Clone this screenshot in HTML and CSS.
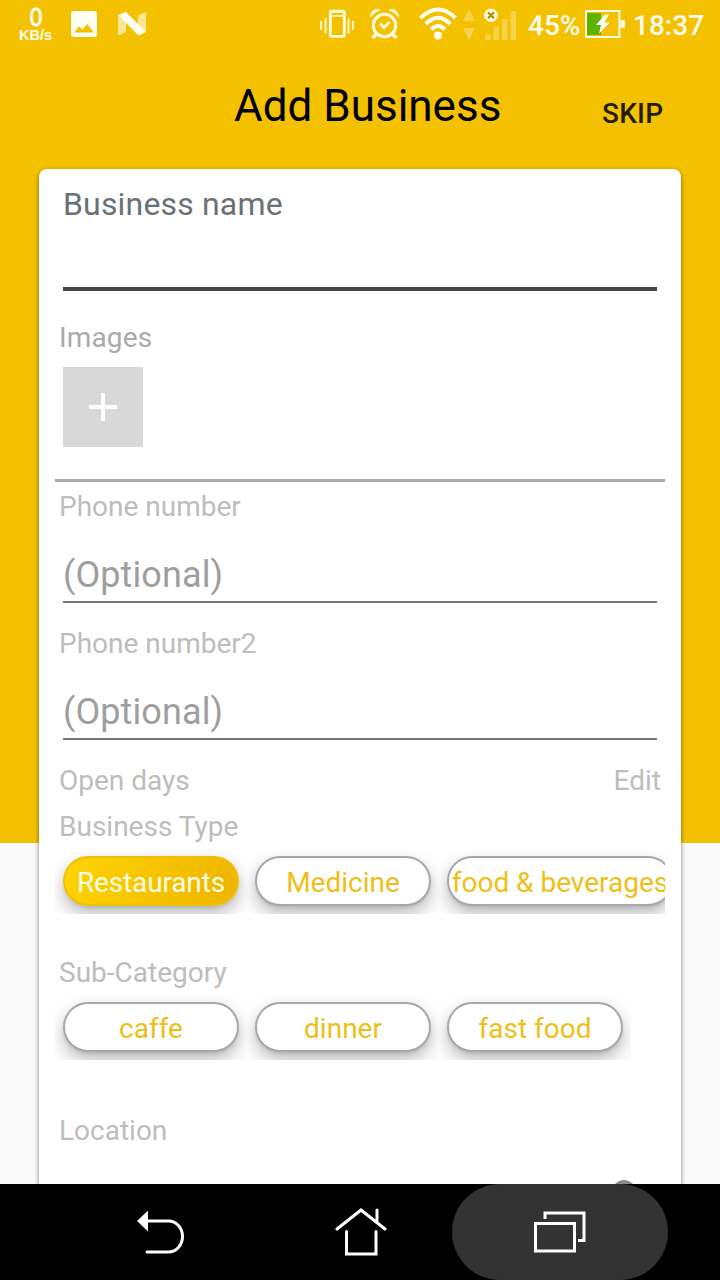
FILE: index.html
```html
<!DOCTYPE html>
<html lang="en">
<head>
<meta charset="utf-8">
<title>Add Business</title>
<link rel="stylesheet" href="styles.css">
</head>
<body>
<div class="screen">
  <header class="status">
    <div class="speed"><span class="speed-value">0</span><span class="speed-unit">KB/s</span></div>
    <svg class="ic-photo" width="26" height="26" viewBox="0 0 26 26"><path fill="#fffef2" fill-rule="evenodd" d="M3 0H23Q26 0 26 3V23Q26 26 23 26H3Q0 26 0 23V3Q0 0 3 0ZM3 21.500H23L16 13L11.500 18.500L8 15.500Z"/></svg>
    <svg class="ic-n" width="28" height="24" viewBox="0 0 28 24"><path fill="#fae694" d="M0 3L8 8V20L0 23.500ZM20 3.500L28 0V20L20 16Z"/><path fill="#fffef2" d="M0 3L8 0L28 20L20.500 23.500Z"/></svg>
    <svg class="ic-vibrate" width="34" height="30" viewBox="0 0 34 30" fill="none" stroke="#fffce0"><rect x="10.300" y="2.400" width="14" height="25" rx="1" stroke-width="2.800"/><path d="M10 7H24" stroke-width="1.500"/><path d="M13 4.800H18M20 4.800H22" stroke="#f5c200" stroke-width="1.500"/><path d="M10 2H24" stroke-width="2.500"/><path d="M1.200 12V21M5.500 9.500V24.500M28.500 9.500V24.500M32.800 12V21" stroke-width="1.800"/></svg>
    <svg class="ic-alarm" width="30" height="32" viewBox="0 0 30 32" fill="none" stroke="#fffce0"><circle cx="14.500" cy="17.500" r="11.200" stroke-width="3"/><path d="M10 15.500L14 19.500L19.500 14" stroke-width="3"/><path d="M6.500 26L2.500 30M22.500 26L26.500 30" stroke-width="3.500"/><path d="M.5 9C1 3 5 .2 10 1.800Q4 4 .5 9ZM28.500 9C28 3 24 .2 19 1.800Q25 4 28.500 9Z" fill="#fffce0" stroke-width="1"/></svg>
    <svg class="ic-wifi" width="38" height="34" viewBox="0 0 38 34" fill="none" stroke="#fffef2" stroke-width="4"><path d="M1.500 11Q19-6 36.500 11M6.800 17Q19 4.500 31.200 17M12 22.500Q19 15.500 26 22.500"/><circle cx="19" cy="28.500" r="4" fill="#fffef2" stroke="none"/></svg>
    <svg class="ic-data" width="12" height="32" viewBox="0 0 12 32" fill="#f8d44d"><path d="M6 0L12 12H0ZM0 19H12L6 31Z"/></svg>
    <svg class="ic-signal" width="33" height="34" viewBox="0 0 33 34"><g fill="#f8d44d"><rect x="1" y="26" width="5.500" height="6" rx="1.500"/><rect x="9.500" y="19" width="5.500" height="13" rx="1.500"/><rect x="18" y="11" width="5.500" height="21" rx="1.500"/><rect x="26.500" y="3" width="5.500" height="29" rx="1.500"/></g><circle cx="7" cy="7.300" r="6.800" fill="#fffce0"/><path d="M4 4.300L10 10.300M10 4.300L4 10.300" stroke="#ba8d00" stroke-width="2.200"/></svg>
    <span class="percent">45%</span>
    <svg class="ic-battery" width="40" height="28" viewBox="0 0 40 28"><path d="M2 3H16V25H2Z" fill="#5cb300"/><rect x="1" y="1" width="33.500" height="26" fill="none" stroke="#fffce8" stroke-width="2"/><path d="M36 10H40V18H36Z" fill="#fffce8"/><path d="M20 4.500L11 15H16L14 23.500L25 12.500H19.500L24 4.500Z" fill="#fffef2"/></svg>
    <span class="clock">18:37</span>
  </header>
  <div class="appbar"><h1 class="title">Add Business</h1><button class="skip">SKIP</button></div>
  <main class="card">
    <div class="name-label">Business name</div>
    <div class="name-input"></div>
    <div class="label images-label">Images</div>
    <div class="add-image"><svg width="28" height="28" viewBox="0 0 28 28"><path d="M14 0V28M0 14H28" stroke="#fff" stroke-width="4"/></svg></div>
    <div class="divider"></div>
    <div class="label phone-label">Phone number</div>
    <div class="field">(Optional)</div>
    <div class="label second-label">Phone number2</div>
    <div class="field">(Optional)</div>
    <div class="label days"><span>Open days</span><span>Edit</span></div>
    <div class="label type-label">Business Type</div>
    <div class="chips"><div class="slot"><div class="chip selected">Restaurants</div></div><div class="slot"><div class="chip">Medicine</div></div><div class="slot"><div class="chip wide">food &amp; beverages</div></div></div>
    <div class="label sub-label">Sub-Category</div>
    <div class="chips"><div class="slot"><div class="chip">caffe</div></div><div class="slot"><div class="chip">dinner</div></div><div class="slot"><div class="chip">fast food</div></div></div>
    <div class="label location-label">Location</div>
    <div class="locate"></div>
  </main>
  <nav class="nav">
    <svg class="ic-back" width="50" height="48" viewBox="0 0 50 48" fill="none" stroke="#fff" stroke-width="3" stroke-linecap="round"><path d="M10 15H32.500A14 15.500 0 0 1 32.500 46H11"/><path d="M1 15L12 4.500V25.500Z" fill="#fff" stroke="none"/></svg>
    <svg class="ic-home" width="52" height="50" viewBox="0 0 52 50" fill="none" stroke="#fff" stroke-width="3" stroke-linecap="round"><path d="M2 22L26 3L50 22M42 3V15"/><path d="M11.500 24.500V47H41V24.500" stroke-linejoin="miter"/></svg>
    <div class="recent"><svg width="52" height="42" viewBox="0 0 52 42" fill="none" stroke="#fff" stroke-width="3"><rect x="1.500" y="12.500" width="39" height="27.500"/><path d="M11 8V2H50V29.500H44"/></svg></div>
  </nav>
</div>
</body>
</html>
```
FILE: styles.css
```css
* { box-sizing: border-box; }
body { margin: 0; font-family: Roboto, "Liberation Sans", sans-serif; }
.screen { width: 720px; height: 1280px; overflow: hidden; display: flex; flex-direction: column; background: linear-gradient(#f4c100 843px, #fafafa 843px); }
.status { height: 50px; flex: none; display: flex; align-items: flex-start; padding-left: 18px; color: #fffef0; }
.status > * { flex: none; }
.speed { width: 35px; display: flex; flex-direction: column; align-items: center; padding-top: 6px; font-family: "Liberation Sans", Arial, sans-serif; font-weight: bold; }
.speed-value { font-size: 25px; line-height: 22px; transform: scaleX(.9); font-weight: normal; -webkit-text-stroke: 1px #fffef0; }
.speed-unit { font-size: 14.5px; line-height: 14px; }
.ic-photo { margin: 11px 0 0 18px; }
.ic-n { margin: 12px 0 0 21px; }
.ic-vibrate { margin: 9px 0 0 174px; }
.ic-alarm { margin: 8px 0 0 16px; }
.ic-wifi { margin: 7px 0 0 19px; }
.ic-data { margin: 9px 0 0 6px; }
.ic-signal { margin: 8px 0 0 9px; }
.percent, .clock { font-size: 28px; line-height: 33px; font-weight: 500; margin-top: 9px; }
.percent { width: 57px; margin-left: 11px; }
.clock { margin-left: 8px; }
.ic-battery { margin: 10px 0 0 0; }
.appbar { height: 119px; flex: none; display: flex; align-items: flex-start; padding-left: 234px; }
.title { margin: 30px 0 0; font-size: 44px; line-height: 52px; font-weight: 400; color: #000; width: 368px; }
.skip { margin: 47px 0 0; padding: 0; border: 0; background: none; font: 500 28px/33px Roboto, sans-serif; color: #251e04; letter-spacing: .2px; }
.card { width: 642px; height: 1015px; flex: none; margin: 0 39px; padding: 16px 16px 0; background: #fff; border-radius: 8px 8px 0 0; box-shadow: 0 2px 5px rgba(0,0,0,.48); overflow: hidden; display: flex; flex-direction: column; }
.card > * { flex: none; }
.name-label { margin-left: 8px; font-size: 32px; line-height: 38px; color: #697176; letter-spacing: .17px; }
.name-input { height: 68px; margin: 0 8px; border-bottom: 4px solid #424748; }
.label { padding: 0 4px; font-size: 28px; line-height: 33px; color: #bdbdbd; }
.images-label { margin-top: 30px; color: #aaa; letter-spacing: .15px; }
.add-image { width: 80px; height: 80px; margin: 13px 0 0 8px; display: flex; align-items: center; justify-content: center; background: #d8d8d8; }
.divider { height: 3px; margin-top: 32px; background: #aaa; }
.phone-label { margin-top: 8px; }
.field { height: 49px; margin: 31px 8px 0; border-bottom: 2px solid #757575; font-size: 36px; line-height: 42px; color: #9e9e9e; letter-spacing: .1px; }
.second-label, .days { margin-top: 24px; }
.days { display: flex; justify-content: space-between; }
.type-label { margin-top: 13px; }
.chips { height: 66px; margin-top: 5px; display: flex; overflow: hidden; }
.slot { flex: none; height: 66px; padding: 8px; overflow: hidden; }
.chip { width: 176px; height: 50px; border: 2px solid #a8a8a8; border-radius: 25px; background: #fff; box-shadow: 0 8px 18px rgba(0,0,0,.27), 0 2px 3px rgba(0,0,0,.08); font-size: 28px; line-height: 49px; text-align: center; color: #edbf18; white-space: nowrap; }
.chip.wide { width: 226px; }
.chip.selected { color: #fffde5; border-color: #f1bd08; background: linear-gradient(110deg, #ffd400, #edb500); letter-spacing: -.15px; }
.sub-label { margin-top: 42px; }
.location-label { margin-top: 54px; }
.locate { width: 24px; height: 24px; margin: 33px 0 0 557px; border-radius: 50%; background: #8c8c8c; }
.nav { height: 96px; flex: none; display: flex; align-items: flex-start; background: #000; position: relative; }
.ic-back { margin: 22px 0 0 136px; }
.ic-home { margin: 23px 0 0 149px; }
.recent { width: 216px; height: 96px; margin-left: 65px; display: flex; align-items: center; justify-content: center; border-radius: 48px; background: #333; }
```
